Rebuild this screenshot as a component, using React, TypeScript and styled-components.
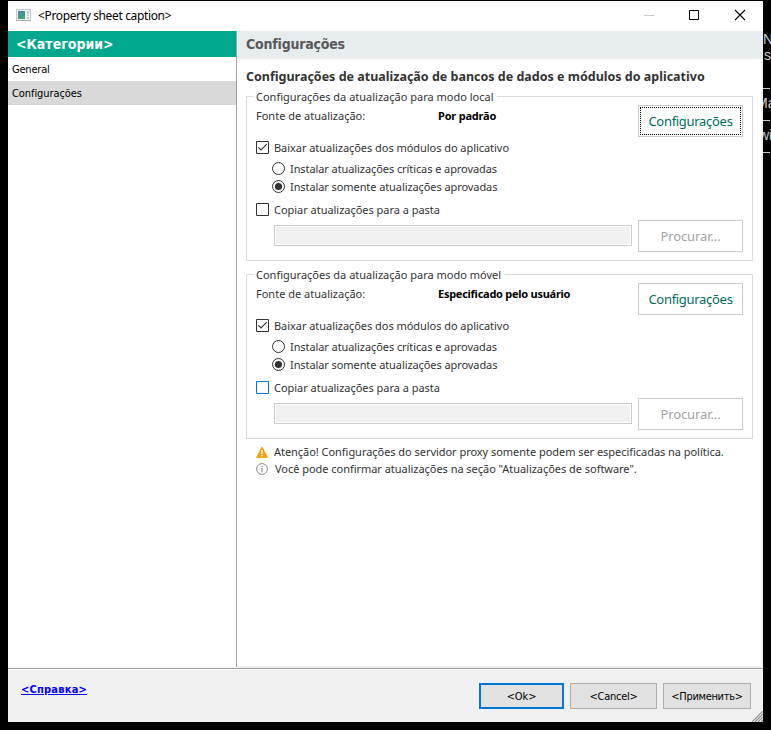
import React from 'react';
import styled, { createGlobalStyle } from 'styled-components';

const ui = '"Noto Sans", "Open Sans", sans-serif';
const classic = '"DejaVu Sans Condensed", "DejaVu Sans", sans-serif';

const GlobalStyle = createGlobalStyle`
  * { box-sizing: border-box; }
  body { margin: 0; background: #000; overflow: hidden; }
`;

const Desktop = styled.div`
  display: grid;
  grid-template-columns: 755px 8px;
  width: 771px;
  height: 730px;
  padding: 1px 0 8px 8px;
  background: #000;
`;

const Window = styled.main`
  display: flex;
  flex-direction: column;
  height: 721px;
  background: #fff;
  color: #000;
`;

const TitleBar = styled.header`
  display: flex;
  align-items: center;
  flex: none;
  height: 30px;
  padding-left: 8px;
  svg { display: block; flex: none; }
`;

const Caption = styled.div<{ $spacing: number }>`
  flex: 1;
  margin-left: 6px;
  font: 12px/16px ${ui};
  letter-spacing: ${p => p.$spacing}px;
  white-space: nowrap;
`;

const WindowControls = styled.div`
  display: flex;
  svg { width: 46px; height: 30px; }
`;

const Body = styled.div`
  display: flex;
  flex: none;
  height: 636px;
`;

const Sidebar = styled.nav`
  width: 229px;
  height: 636px;
  border-right: 1px solid #a0a0a0;
`;

const SidebarTitle = styled.h2`
  height: 26px;
  margin: 0;
  padding-left: 8px;
  background: #00a88e;
  color: #fff;
  font: bold 14px/26px ${classic};
`;

const Category = styled.div<{ $selected?: boolean; $spacing?: number }>`
  height: 24px;
  padding-left: 4px;
  background: ${p => (p.$selected ? '#d9d9d9' : '#fff')};
  font: 11px/26px ${classic};
  letter-spacing: ${p => p.$spacing ?? 0}px;
`;

const Page = styled.section`
  display: flex;
  flex-direction: column;
  flex: 1;
  border-left: 1px solid #fff;
  background: #f0f0f0;
`;

const PageTitle = styled.h2`
  flex: none;
  height: 28px;
  margin: 0;
  padding-left: 8px;
  border-bottom: 2px solid #ececec;
  background: #e7ecee;
  color: #57595b;
  font: bold 14px/26px ${classic};
  letter-spacing: -0.2px;
`;

const PageContent = styled.div`
  flex: 1;
  width: 523px;
  margin-bottom: 1px;
  padding: 8px 0 0 8px;
  background: #fff;
`;

const Heading = styled.h1`
  height: 20px;
  margin: 0 0 3px;
  color: #333;
  font: bold 12.5px/20px ${ui};
  white-space: nowrap;
`;

const Group = styled.fieldset`
  width: 507px;
  height: 171px;
  min-width: 0;
  margin: 0 0 7px;
  padding: 0 9px;
  border: 1px solid #dcdcdc;
`;

const GroupTitle = styled.legend`
  height: 13px;
  margin-left: -3px;
  padding: 0 3px;
  color: #333;
  font: 11px/13px ${ui};
  white-space: nowrap;
`;

const GroupColumns = styled.div`
  display: flex;
  gap: 6px;
`;

const Options = styled.div`
  width: 376px;
`;

const ButtonColumn = styled.div`
  display: flex;
  flex-direction: column;
  gap: 83px;
  width: 105px;
  padding-top: 2px;
`;

const SourceRow = styled.div`
  display: grid;
  grid-template-columns: 182px 1fr;
  height: 16px;
  margin: 5px 0 16px;
  color: #333;
  font: 11px/16px ${ui};
`;

const SourceValue = styled.strong<{ $spacing: number }>`
  color: #000;
  letter-spacing: ${p => p.$spacing}px;
`;

const Option = styled.label<{ $indent?: boolean; $before?: number; $spacing: number }>`
  display: flex;
  align-items: center;
  gap: 5px;
  height: 16px;
  margin-top: ${p => p.$before ?? 0}px;
  padding-left: ${p => (p.$indent ? 16 : 0)}px;
  color: #333;
  font: 11px/16px ${ui};
  letter-spacing: ${p => p.$spacing}px;
  white-space: nowrap;
  svg { display: block; flex: none; margin-bottom: 2px; }
`;

const PathField = styled.div`
  width: 358px;
  height: 21px;
  margin: 7px 0 0 18px;
  border: 1px solid #ccc;
  background: #f0f0f0;
  box-shadow: inset 0 0 0 1px #fff;
`;

const ActionButton = styled.button<{ $focused?: boolean }>`
  width: 105px;
  height: 32px;
  padding: 0;
  border: 1px solid #ccc;
  background: #fff;
  color: #006d5c;
  font: 13px/20px ${ui};
  letter-spacing: -0.3px;
  outline: ${p => (p.$focused ? '1px dotted #000' : 'none')};
  outline-offset: -3px;
  &:disabled { color: #a2a2a2; letter-spacing: -0.1px; }
`;

const Notes = styled.div`
  margin-top: -2px;
  padding-left: 10px;
`;

const Note = styled.p<{ $gap: number; $spacing: number }>`
  display: flex;
  align-items: center;
  gap: ${p => p.$gap}px;
  height: 17px;
  margin: 0;
  color: #333;
  font: 11px/15px ${ui};
  letter-spacing: ${p => p.$spacing}px;
  white-space: nowrap;
  padding-bottom: 2px;
  svg { display: block; flex: none; margin-top: 1px; }
`;

const Footer = styled.footer`
  display: flex;
  justify-content: space-between;
  flex: 1;
  margin-top: 1px;
  padding: 14px 12px 0;
  border-top: 1px solid #a0a0a0;
  background: #f0f0f0;
  box-shadow: inset 0 1px 0 #fff, 0 -1px 0 #f0f0f0;
  position: relative;
`;

const HelpLink = styled.a`
  height: 16px;
  margin: -1px 0 0 1px;
  color: #00f;
  font: bold 11px/16px ${classic};
  letter-spacing: 0.22px;
  text-decoration: underline;
`;

const DialogButtons = styled.div`
  display: flex;
  gap: 6px;
`;

const DialogButton = styled.button<{ $width: number; $primary?: boolean; $spacing?: number }>`
  width: ${p => p.$width}px;
  height: 26px;
  padding: ${p => (p.$primary ? 1 : 2)}px 0 0;
  border: ${p => (p.$primary ? '2px solid #0078d7' : '1px solid #adadad')};
  background: #e1e1e1;
  color: #000;
  font: 11px/16px ${classic};
  letter-spacing: ${p => p.$spacing ?? 0}px;
  white-space: nowrap;
`;

const Grip = styled.svg`
  position: absolute;
  right: 0;
  bottom: 0;
`;

const Console = styled.aside`
  overflow: hidden;
  padding-top: 30px;
  color: #ccc;
  font: 14px/16px "Liberation Sans", sans-serif;
  white-space: pre;
`;

const ConsoleLine = styled.div<{ $shift?: number }>`
  height: 16px;
  text-indent: ${p => p.$shift ?? 0}px;
`;

const ConsoleRule = styled.div`
  height: 16px;
  padding-top: 9px;
  &::before {
    content: '';
    display: block;
    height: 1px;
    background: repeating-linear-gradient(90deg, #ccc 0 7px, #000 7px 8px);
  }
`;

const AppIcon = () => (
  <svg width="16" height="16" viewBox="0 0 16 16" shapeRendering="crispEdges">
    <defs>
      <linearGradient id="pane" x1="0" y1="0" x2="0.4" y2="1">
        <stop offset="0" stopColor="#4d83a8" />
        <stop offset="1" stopColor="#42a779" />
      </linearGradient>
    </defs>
    <path d="M.5 1.5h14v11H.5z" fill="#f1f3f4" stroke="#c3c8ca" />
    <path d="M2 3h7v8H2z" fill="url(#pane)" />
    <path d="M11 3h2v3h-2zm0 4h2v1h-2zm0 2h2v2h-2z" fill="#bdc8cd" />
    <path d="M0 12.5h15" stroke="#a9adaf" />
  </svg>
);

const CheckBox = ({ checked, hot }: { checked?: boolean; hot?: boolean }) => (
  <svg width="13" height="13" viewBox="0 0 13 13">
    <path d="M.5.5h12v12H.5z" fill="#fff" stroke={hot ? '#0078d7' : '#333'} />
    {checked && <path d="M2.3 6.3 5 9l5.8-5.8" fill="none" stroke="#333" strokeWidth="1.2" />}
  </svg>
);

const Radio = ({ checked }: { checked?: boolean }) => (
  <svg width="13" height="13" viewBox="0 0 13 13">
    <circle cx="6.5" cy="6.5" r="6" fill="#fff" stroke="#333" />
    {checked && <circle cx="6.5" cy="6.5" r="3.6" fill="#333" />}
  </svg>
);

type GroupProps = {
  title: string;
  source: string;
  sourceSpacing: number;
  focused?: boolean;
  hot?: boolean;
};

const UpdateGroup = ({ title, source, sourceSpacing, focused, hot }: GroupProps) => (
  <Group>
    <GroupTitle>{title}</GroupTitle>
    <GroupColumns>
      <Options>
        <SourceRow>
          <span>Fonte de atualização:</span>
          <SourceValue $spacing={sourceSpacing}>{source}</SourceValue>
        </SourceRow>
        <Option $spacing={-0.045}><CheckBox checked />Baixar atualizações dos módulos do aplicativo</Option>
        <Option $indent $before={5} $spacing={-0.085}><Radio />Instalar atualizações críticas e aprovadas</Option>
        <Option $indent $before={2} $spacing={-0.085}><Radio checked />Instalar somente atualizações aprovadas</Option>
        <Option $before={7} $spacing={-0.03}><CheckBox hot={hot} />Copiar atualizações para a pasta</Option>
        <PathField />
      </Options>
      <ButtonColumn>
        <ActionButton $focused={focused}>Configurações</ActionButton>
        <ActionButton disabled>Procurar...</ActionButton>
      </ButtonColumn>
    </GroupColumns>
  </Group>
);

export default function App() {
  return (
    <Desktop>
      <GlobalStyle />
      <Window>
        <TitleBar>
          <AppIcon />
          <Caption $spacing={-0.36}>&lt;Property sheet caption&gt;</Caption>
          <WindowControls>
            <svg viewBox="0 0 46 30"><path d="M19 14.5h10" stroke="#ccc" /></svg>
            <svg viewBox="0 0 46 30"><path d="M18.5 9.5h9v9h-9z" fill="none" stroke="#000" /></svg>
            <svg viewBox="0 0 46 30"><path d="m18 9 10 10M28 9 18 19" stroke="#000" strokeWidth="1.1" /></svg>
          </WindowControls>
        </TitleBar>
        <Body>
          <Sidebar>
            <SidebarTitle>&lt;Категории&gt;</SidebarTitle>
            <Category $spacing={-0.2}>General</Category>
            <Category $selected $spacing={-0.08}>Configurações</Category>
          </Sidebar>
          <Page>
            <PageTitle>Configurações</PageTitle>
            <PageContent>
              <Heading>Configurações de atualização de bancos de dados e módulos do aplicativo</Heading>
              <UpdateGroup title="Configurações da atualização para modo local" source="Por padrão" sourceSpacing={-0.2} focused />
              <UpdateGroup title="Configurações da atualização para modo móvel" source="Especificado pelo usuário" sourceSpacing={-0.26} hot />
              <Notes>
                <Note $gap={6} $spacing={-0.04}>
                  <svg width="12" height="12" viewBox="0 0 12 12">
                    <path d="M6 .8 11.5 11.5H.5z" fill="#f0a30a" stroke="#f0a30a" strokeLinejoin="round" strokeWidth=".8" />
                    <path d="M5.3 4h1.4v4H5.3zm0 5h1.4v1.5H5.3z" fill="#fff" />
                  </svg>
                  Atenção! Configurações do servidor proxy somente podem ser especificadas na política.
                </Note>
                <Note $gap={7} $spacing={-0.035}>
                  <svg width="12" height="12" viewBox="0 0 12 12">
                    <circle cx="6" cy="6" r="5.4" fill="#fff" stroke="#8c8c8c" />
                    <path d="M5.5 3h1v1h-1zm0 2h1v4h-1z" fill="#777" />
                  </svg>
                  Você pode confirmar atualizações na seção "Atualizações de software".
                </Note>
              </Notes>
            </PageContent>
          </Page>
        </Body>
        <Footer>
          <HelpLink>&lt;Справка&gt;</HelpLink>
          <DialogButtons>
            <DialogButton $width={85} $primary $spacing={-0.1}>&lt;Ok&gt;</DialogButton>
            <DialogButton $width={87} $spacing={-0.25}>&lt;Cancel&gt;</DialogButton>
            <DialogButton $width={88} $spacing={-0.32}>&lt;Применить&gt;</DialogButton>
          </DialogButtons>
          <Grip width="11" height="11" viewBox="0 0 11 11">
            <path d="M0 11 11 0M3 11l8-8M6 11l5-5M9 11l2-2" stroke="#8f8f8f" strokeWidth="1.2" />
          </Grip>
        </Footer>
      </Window>
      <Console>
        <ConsoleLine>N</ConsoleLine>
        <ConsoleLine $shift={1}>s</ConsoleLine>
        <ConsoleLine />
        <ConsoleRule />
        <ConsoleLine $shift={-7}>Ma</ConsoleLine>
        <ConsoleRule />
        <ConsoleLine $shift={-4}>wi</ConsoleLine>
        <ConsoleRule />
      </Console>
    </Desktop>
  );
}
